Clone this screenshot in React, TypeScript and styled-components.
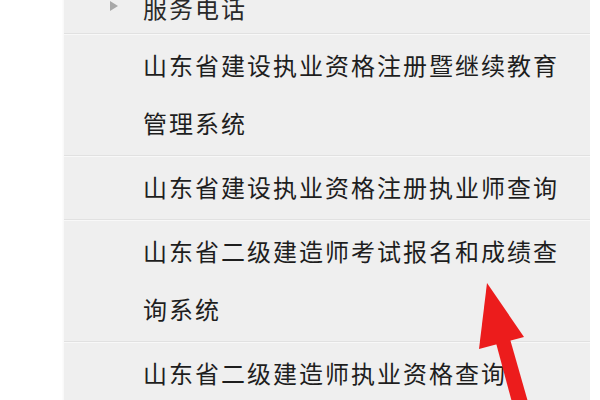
import React from 'react';
import styled, { createGlobalStyle } from 'styled-components';

const GlobalStyle = createGlobalStyle`
    html, body {
        margin: 0;
        padding: 0;
        background: #ffffff;
        overflow: hidden;
    }
    body {
        font-family: "Noto Sans CJK SC", "Noto Sans", sans-serif;
    }
`;

const links = [
    '山东省建设执业资格注册暨继续教育管理系统',
    '山东省建设执业资格注册执业师查询',
    '山东省二级建造师考试报名和成绩查询系统',
    '山东省二级建造师执业资格查询',
];

export default function App() {
    return (
        <Page>
            <GlobalStyle />
            <Menu>
                <Row $first>
                    <Caret />
                    <GroupTitle>服务电话</GroupTitle>
                </Row>
                {links.map((text) => (
                    <Row key={text}>
                        <LinkText>{text}</LinkText>
                    </Row>
                ))}
            </Menu>
            <Pointer viewBox="0 0 600 400" aria-hidden>
                <polygon points="487,283 479,349 524,337" fill="#ec1c1c" />
                <polygon points="496,343 510,339 528,402 513,406" fill="#ec1c1c" />
            </Pointer>
        </Page>
    );
}

const Page = styled.div`
    position: relative;
    width: 600px;
    height: 400px;
    overflow: hidden;
    background: #ffffff;
`;

const Menu = styled.ul`
    list-style: none;
    margin: -19px 0 0 64px;
    padding: 0;
    width: 526px;
    background: #efefef;
    box-shadow: -1px 0 2px rgba(0, 0, 0, 0.04);
`;

const Row = styled.li<{ $first?: boolean }>`
    position: relative;
    display: flex;
    align-items: flex-start;
    padding: ${(p) => (p.$first ? '2px 0 0' : '2px 0 3px')};
    padding-left: 79px;
    border-bottom: 1px solid #e1e1e1;
    box-shadow: 0 1px 0 #f8f8f8;
`;

const Caret = styled.span`
    position: absolute;
    left: 46px;
    top: 20px;
    width: 0;
    height: 0;
    border-top: 5px solid transparent;
    border-bottom: 5px solid transparent;
    border-left: 8px solid #a8a8a8;
`;

const GroupTitle = styled.span`
    font-size: 24px;
    line-height: 50px;
    letter-spacing: 2px;
    color: #2a2a2a;
`;

const LinkText = styled.span`
    display: block;
    width: 425px;
    font-size: 24px;
    line-height: 58px;
    letter-spacing: 2px;
    color: #1e1e1e;
`;

const Pointer = styled.svg`
    position: absolute;
    left: 0;
    top: 0;
    width: 600px;
    height: 400px;
    pointer-events: none;
`;
